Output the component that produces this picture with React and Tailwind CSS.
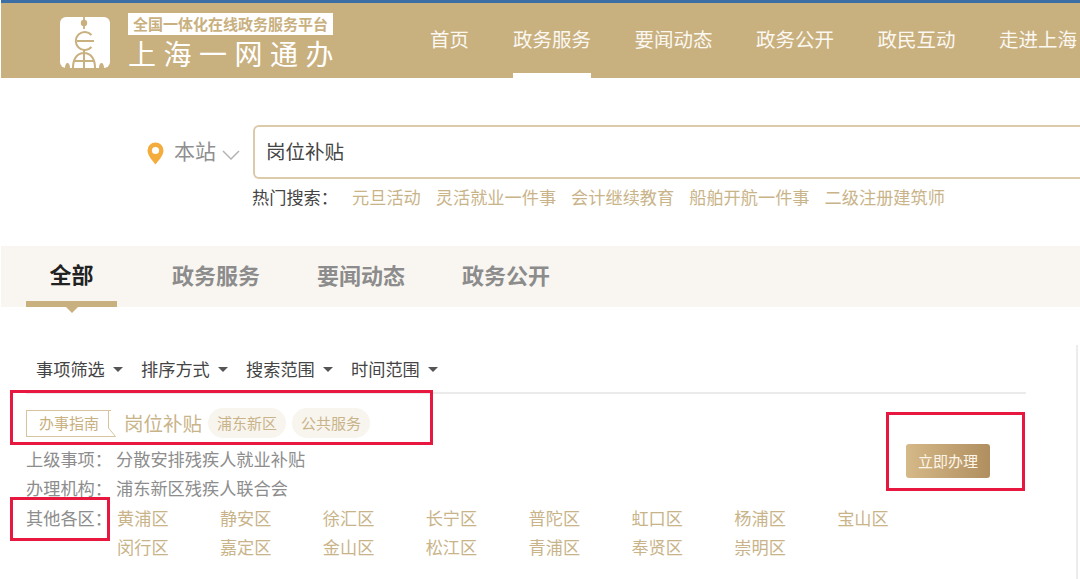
const navItems = ["政务服务", "要闻动态", "政务公开", "政民互动", "走进上海"];
const hotSearch = ["元旦活动", "灵活就业一件事", "会计继续教育", "船舶开航一件事", "二级注册建筑师"];
const tabs = ["政务服务", "要闻动态", "政务公开"];
const filters = ["事项筛选", "排序方式", "搜索范围", "时间范围"];
const districts = [
  "黄浦区", "静安区", "徐汇区", "长宁区", "普陀区", "虹口区", "杨浦区", "宝山区",
  "闵行区", "嘉定区", "金山区", "松江区", "青浦区", "奉贤区", "崇明区",
];

const Logo = () => (
  <svg width="50" height="51" viewBox="0 0 50 51" className="mt-[3px] shrink-0">
    <rect width="50" height="51" rx="6" fill="#fff" />
    <path d="M24 0v12" stroke="#c9b07f" strokeWidth="1.800" />
    <circle cx="24" cy="6" r="3.200" fill="#c9b07f" />
    <path d="M17 24h17M31.500 30a9 9 0 1 1 0-12" fill="none" stroke="#c9b07f" strokeWidth="2" />
    <path d="M24 33v18M13 51c0-9 4-15 11-15s11 6 11 15M14 44h20" fill="none" stroke="#c9b07f" strokeWidth="2" />
    <path d="M5 51c0-3 1-5 2.500-5S10 48 10 51zM39 51c0-3 1-5 2.500-5S44 48 44 51z" fill="#c9b07f" />
  </svg>
);

const Header = () => (
  <div className="ml-px flex h-[78px] border-t-[3px] border-[#3c6ea6] bg-[#c9b07f]">
    <div className="ml-[59px] flex w-[370px] shrink-0 items-center gap-[18px]">
      <Logo />
      <div className="flex w-[205px] flex-col">
        <div className="h-[22px] bg-white text-center text-[15px] leading-[22px] font-bold whitespace-nowrap text-[#c9b07f]">全国一体化在线政务服务平台</div>
        <div className="mt-[4px] text-[28px] leading-[29px] tracking-[7.500px] whitespace-nowrap text-white">上海一网通办</div>
      </div>
    </div>
    <div className="flex text-[19.500px] text-[#fbf8f2]">
      <div className="flex h-[75px] w-[83px] shrink-0 items-center pb-[4px]">首页</div>
      {navItems.map((item, i) => (
        <div key={item} className={`mr-[43.500px] flex h-[75px] w-[78px] shrink-0 items-center justify-center pb-[4px] whitespace-nowrap ${i === 0 ? "border-b-[5px] border-white pt-[5px]" : ""}`}>
          {item}
        </div>
      ))}
    </div>
  </div>
);

const SearchArea = () => (
  <div className="h-[168px] pt-[47px]">
    <div className="flex h-[54px] items-center">
      <svg width="17" height="23" viewBox="0 0 17 23" className="ml-[147px] mt-[3px]">
        <path d="M8.500 0.500a8 8 0 0 1 8 8c0 5-5 10-8 14c-3-4-8-9-8-14a8 8 0 0 1 8-8z" fill="#f4ac3c" />
        <circle cx="8.500" cy="8.500" r="3.600" fill="#fff" />
      </svg>
      <span className="ml-[10px] pb-[3px] text-[21px] text-[#8f8f8f]">本站</span>
      <svg width="18" height="10" viewBox="0 0 18 10" className="ml-[6px] mt-[5px]">
        <path d="M1 1l8 8l8-8" fill="none" stroke="#b4b4b4" strokeWidth="1.500" />
      </svg>
      <div className="ml-[13px] flex h-[54px] flex-1 items-center rounded-l-[6px] border-2 border-r-0 border-[#dccbaa] pb-[2px] pl-[11px] text-[19.500px] text-[#444]">岗位补贴</div>
    </div>
    <div className="mt-[5px] ml-[252px] flex h-[28px] items-center pb-[2px] text-[17.200px] whitespace-nowrap text-[#c9b48a]">
      <span className="w-[100px] text-[#444]">热门搜索：</span>
      <div className="flex gap-[15px]">
        {hotSearch.map((item) => <span key={item}>{item}</span>)}
      </div>
    </div>
  </div>
);

const Tabs = () => (
  <div className="relative ml-px flex h-[61px] bg-[#f9f6f1] text-[22px] font-bold text-[#8c8c8c]">
    <div className="relative ml-[25px] flex h-[61px] w-[91px] items-center justify-center border-b-[6px] border-[#c9b07f] pb-[1px] text-[#222]">
      全部
      <span className="absolute top-[61px] left-[40px] h-0 w-0 border-x-[6px] border-t-[6px] border-x-transparent border-t-[#c9b07f]" />
    </div>
    <div className="ml-[55px] flex items-center gap-[57px] pb-[4px]">
      {tabs.map((item) => <span key={item}>{item}</span>)}
    </div>
  </div>
);

const Filters = () => (
  <div className="flex h-[49px] items-center border-b-2 border-[#ebebeb] pl-[10px] text-[17.200px] text-[#444]">
    {filters.map((item) => (
      <div key={item} className="flex w-[105px] items-center">
        <span className="whitespace-nowrap">{item}</span>
        <span className="ml-[8px] mt-[2px] h-0 w-0 border-x-[5px] border-t-[5px] border-x-transparent border-t-[#555]" />
      </div>
    ))}
  </div>
);

const Pill = ({ children }) => (
  <span className="flex h-[30px] w-[78px] items-center justify-center rounded-[15px] bg-[#f8f5ef] text-[15px] text-[#c9b48a]">{children}</span>
);

const Result = () => (
  <div className="pt-[13px]">
    <div className="flex h-[32px] items-center">
      <div className="relative flex h-[27px] w-[85px] items-center justify-center border border-r-0 border-[#d6c49f] text-[15px] text-[#c9b07f]">
        办事指南
        <svg width="8" height="27" viewBox="0 0 8 27" className="absolute top-[-1px] right-[-5px]">
          <path d="M0.500 0v18l7 8.500H0" fill="none" stroke="#d6c49f" />
        </svg>
      </div>
      <span className="ml-[13px] text-[19.500px] text-[#c9b48a]">岗位补贴</span>
      <div className="ml-[6px] flex gap-[6px]">
        <Pill>浦东新区</Pill>
        <Pill>公共服务</Pill>
      </div>
    </div>
    <div className="mt-[5px] text-[17.200px] leading-[29.400px] text-[#8d8d8d]">
      <div className="flex">
        <span className="w-[90px]">上级事项：</span>
        <span>分散安排残疾人就业补贴</span>
      </div>
      <div className="flex">
        <span className="w-[90px]">办理机构：</span>
        <span>浦东新区残疾人联合会</span>
      </div>
      <div className="flex">
        <span className="w-[91px]">其他各区：</span>
        <div className="grid w-[823px] grid-cols-8 text-[#c9b48a]">
          {districts.map((item) => <span key={item}>{item}</span>)}
        </div>
      </div>
    </div>
  </div>
);

export default function App() {
  return (
    <div className="relative h-[579px] w-[1080px] overflow-hidden bg-white font-['Noto_Sans_CJK_SC',sans-serif]">
      <Header />
      <SearchArea />
      <Tabs />
      <div className="mt-[38px] ml-[26px] h-[234px] w-[1052px] border-r-2 border-[#ececec]">
        <div className="relative w-[1000px]">
          <Filters />
          <Result />
          <button className="absolute top-[99px] left-[880px] h-[34px] w-[84px] rounded-[3px] bg-gradient-to-r from-[#d6b988] to-[#b08e5f] text-[15px] text-[#fdf6e8]">立即办理</button>
        </div>
      </div>
      {/* red annotation boxes */}
      <div className="absolute top-[390px] left-[10px] h-[55px] w-[423px] border-[3px] border-[#e8173f]" />
      <div className="absolute top-[412px] left-[886px] h-[79px] w-[139px] border-[3px] border-[#e8173f]" />
      <div className="absolute top-[497px] left-[10px] h-[44px] w-[100px] border-[3px] border-[#e8173f]" />
    </div>
  );
}
